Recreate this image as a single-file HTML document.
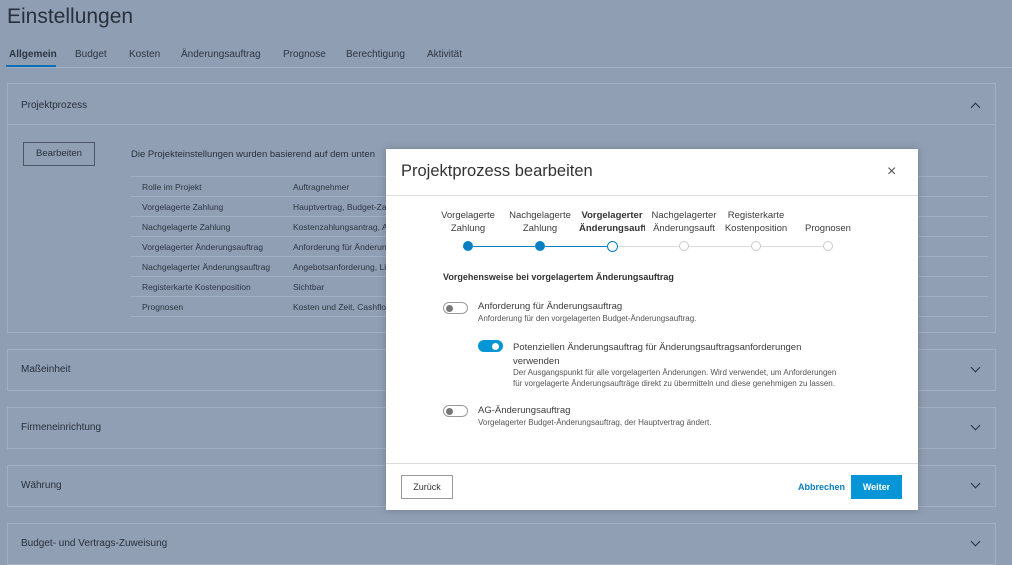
<!DOCTYPE html>
<html><head><meta charset="utf-8"><style>
*{box-sizing:border-box;margin:0;padding:0}
body{width:1012px;height:544px;overflow:hidden;background:#8f9eb3;font-family:"Liberation Sans",sans-serif;color:#27303c;position:relative}
.abs{position:absolute}
.h1{left:7px;top:5px;font-size:21px;color:#27303c}
.tabs{left:7px;top:49px;font-size:10px;color:#2c3542}
.tabs span{position:absolute;white-space:nowrap}
.panel{position:absolute;left:7px;width:989px;border:1px solid #a2afc1;background:#909fb4}
.ph{font-size:10px;position:absolute;left:13px}
.chev{position:absolute;right:16px;width:7px;height:7px;border-right:1.3px solid #27303c;border-bottom:1.3px solid #27303c}
table{border-collapse:collapse;font-size:8.5px;color:#2c3542}
td{height:20px;border-top:1px solid #a2afc1;padding-left:11px}
.modal{left:386px;top:149px;width:532px;height:361px;background:#fff;box-shadow:0 0 8px rgba(0,0,0,.2)}
.step{position:absolute;top:60px;width:80px;margin-left:-40px;text-align:center;font-size:9.5px;line-height:13px;color:#3c3c3c;white-space:nowrap;overflow:hidden}
.dot{position:absolute;top:92px;width:10px;height:10px;margin-left:-5px;border-radius:50%;border:1px solid #ccc;background:#fff}
.tog{position:absolute;width:25px;height:12px;border-radius:6px;border:1px solid #999;background:#fff}
.tog i{position:absolute;left:2px;top:2px;width:7px;height:7px;border-radius:50%;background:#777}
.t1{font-size:9.5px;color:#3c3c3c;position:absolute}
.t2{font-size:8px;color:#555;position:absolute;line-height:11px}
</style></head><body>
<div class="abs h1">Einstellungen</div>
<div class="abs tabs" style="width:1005px;height:19px;border-bottom:1px solid #a2afc1">
<span style="left:2px;font-weight:bold">Allgemein</span><span style="left:68px">Budget</span><span style="left:122px">Kosten</span><span style="left:174px">Änderungsauftrag</span><span style="left:276px">Prognose</span><span style="left:339px">Berechtigung</span><span style="left:420px">Aktivität</span>
<div class="abs" style="left:-1px;top:16px;width:50px;height:2px;background:#0a6fb5"></div></div>
<div class="panel" style="top:83px;height:250px">
<div class="ph" style="top:16px">Projektprozess</div>
<div class="chev" style="top:20px;transform:rotate(-135deg)"></div>
<div class="abs" style="left:0;top:40px;width:987px;border-top:1px solid #a2afc1"></div>
<div class="abs" style="left:15px;top:58px;width:72px;height:24px;border:1px solid #4b5564;font-size:9.5px;text-align:center;line-height:22px">Bearbeiten</div>
<div class="abs" style="left:123px;top:65px;font-size:9.5px;white-space:nowrap">Die Projekteinstellungen wurden basierend auf dem unten</div>
<table class="abs" style="left:123px;top:92px;width:857px">
<tr><td style="width:151px">Rolle im Projekt</td><td>Auftragnehmer</td></tr>
<tr><td>Vorgelagerte Zahlung</td><td>Hauptvertrag, Budget-Za</td></tr>
<tr><td>Nachgelagerte Zahlung</td><td>Kostenzahlungsantrag, A</td></tr>
<tr><td>Vorgelagerter Änderungsauftrag</td><td>Anforderung für Änderun</td></tr>
<tr><td>Nachgelagerter Änderungsauftrag</td><td>Angebotsanforderung, Li</td></tr>
<tr><td>Registerkarte Kostenposition</td><td>Sichtbar</td></tr>
<tr><td style="border-bottom:1px solid #a2afc1">Prognosen</td><td style="border-bottom:1px solid #a2afc1">Kosten und Zeit, Cashflo</td></tr>
</table></div>
<div class="panel" style="top:349px;height:42px"><div class="ph" style="top:14px">Maßeinheit</div><div class="chev" style="top:14px;transform:rotate(45deg)"></div></div>
<div class="panel" style="top:407px;height:42px"><div class="ph" style="top:14px">Firmeneinrichtung</div><div class="chev" style="top:14px;transform:rotate(45deg)"></div></div>
<div class="panel" style="top:465px;height:42px"><div class="ph" style="top:14px">Währung</div><div class="chev" style="top:14px;transform:rotate(45deg)"></div></div>
<div class="panel" style="top:523px;height:42px"><div class="ph" style="top:14px">Budget- und Vertrags-Zuweisung</div><div class="chev" style="top:14px;transform:rotate(45deg)"></div></div>

<div class="abs modal">
<div class="abs" style="left:15px;top:13px;font-size:16.5px;color:#333">Projektprozess bearbeiten</div>
<div class="abs" style="left:501px;top:14px;font-size:16px;color:#555">×</div>
<div class="abs" style="left:0;top:46px;width:532px;border-top:1px solid #ddd"></div>
<div class="abs" style="left:82px;top:97px;width:144px;height:1px;background:#0a7fc4"></div>
<div class="abs" style="left:226px;top:97px;width:216px;height:1px;background:#ddd"></div>
<div class="step" style="left:82px">Vorgelagerte<br>Zahlung</div>
<div class="step" style="left:154px;width:70px;margin-left:-35px">Nachgelagerte<br>Zahlung</div>
<div class="step" style="left:226px;width:66px;margin-left:-33px;font-weight:bold;color:#333">Vorgelagerter<br>Änderungsauft</div>
<div class="step" style="left:298px;width:66px;margin-left:-33px">Nachgelagerter<br>Änderungsauft</div>
<div class="step" style="left:370px;width:66px;margin-left:-33px">Registerkarte<br>Kostenposition</div>
<div class="step" style="left:442px"><br>Prognosen</div>
<div class="dot" style="left:82px;background:#0a7fc4;border-color:#0a7fc4"></div>
<div class="dot" style="left:154px;background:#0a7fc4;border-color:#0a7fc4"></div>
<div class="dot" style="left:226px;border:1.3px solid #0a7fc4;width:11px;height:11px"></div>
<div class="dot" style="left:298px"></div><div class="dot" style="left:370px"></div><div class="dot" style="left:442px"></div>
<div class="abs" style="left:57px;top:123px;font-size:9px;font-weight:bold;color:#333">Vorgehensweise bei vorgelagertem Änderungsauftrag</div>
<div class="tog" style="left:57px;top:153px"><i></i></div>
<div class="t1" style="left:92px;top:152px">Anforderung für Änderungsauftrag</div>
<div class="t2" style="left:92px;top:164px">Anforderung für den vorgelagerten Budget-Änderungsauftrag.</div>
<div class="tog" style="left:92px;top:191px;background:#0696d7;border-color:#0696d7"><i style="left:13px;background:#fff"></i></div>
<div class="t1" style="left:127px;top:192px;line-height:14px">Potenziellen Änderungsauftrag für Änderungsauftragsanforderungen<br>verwenden</div>
<div class="t2" style="left:127px;top:218px">Der Ausgangspunkt für alle vorgelagerten Änderungen. Wird verwendet, um Anforderungen<br>für vorgelagerte Änderungsaufträge direkt zu übermitteln und diese genehmigen zu lassen.</div>
<div class="tog" style="left:57px;top:256px"><i></i></div>
<div class="t1" style="left:92px;top:256px">AG-Änderungsauftrag</div>
<div class="t2" style="left:92px;top:268px">Vorgelagerter Budget-Änderungsauftrag, der Hauptvertrag ändert.</div>
<div class="abs" style="left:0;top:314px;width:532px;border-top:1px solid #ddd"></div>
<div class="abs" style="left:15px;top:326px;width:52px;height:24px;border:1px solid #999;font-size:9px;text-align:center;line-height:22px;color:#333">Zurück</div>
<div class="abs" style="left:412px;top:333px;font-size:9px;font-weight:bold;color:#0a7fc4">Abbrechen</div>
<div class="abs" style="left:465px;top:326px;width:51px;height:24px;background:#0696d7;color:#fff;font-size:9px;font-weight:bold;text-align:center;line-height:24px">Weiter</div>
</div>
</body></html>
